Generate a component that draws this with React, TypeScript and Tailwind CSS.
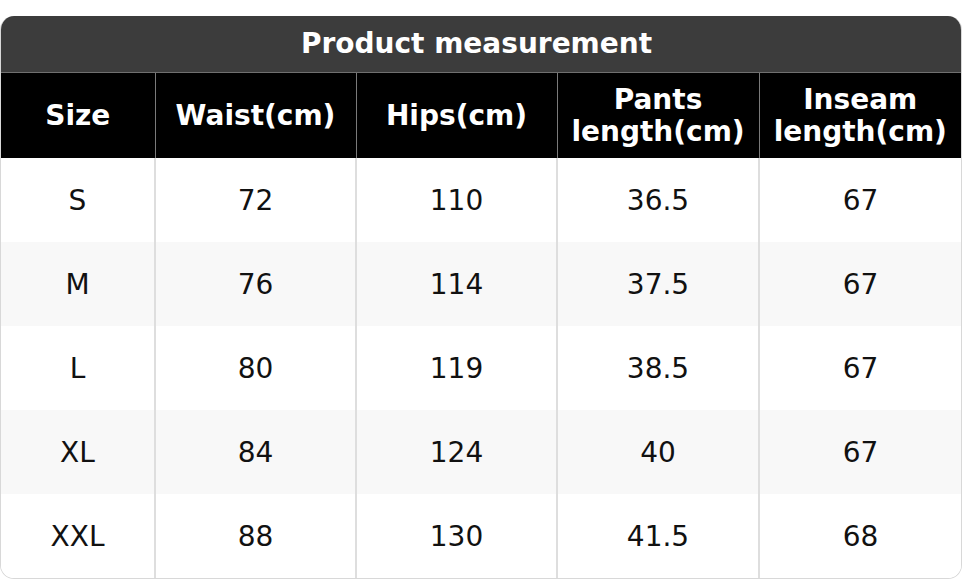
const columns = ['Size', 'Waist(cm)', 'Hips(cm)', 'Pants length(cm)', 'Inseam length(cm)'];
const widths = ['w-[154px]', 'w-[201px]', 'w-[201px]', 'w-[202px]', 'w-[202px]'];

const rows = [
    ['S', '72', '110', '36.5', '67'],
    ['M', '76', '114', '37.5', '67'],
    ['L', '80', '119', '38.5', '67'],
    ['XL', '84', '124', '40', '67'],
    ['XXL', '88', '130', '41.5', '68'],
];

export default function App() {
    return (
        <div className="pt-4 bg-white min-h-screen" style={{ fontFamily: '"DejaVu Sans", Verdana, sans-serif' }}>
            <div className="w-[962px] rounded-[14px] overflow-hidden border-x border-b border-[#d8d8d8]">
                {/* Title */}
                <div className="h-[57px] bg-[#3c3c3c] border-b border-[#707070] flex items-center justify-center pr-[9px]">
                    <h1 className="text-white font-bold text-[28px] leading-none">Product measurement</h1>
                </div>

                <table className="w-full table-fixed border-collapse">
                    <colgroup>
                        {widths.map((w, i) => (
                            <col key={i} className={w} />
                        ))}
                    </colgroup>
                    <thead>
                        <tr className="h-[85px] bg-black">
                            {columns.map((c, i) => (
                                <th
                                    key={c}
                                    className={`text-white font-bold text-[28px] leading-[32px] text-center px-1 ${i > 0 ? 'border-l border-[#7a7a7a]' : ''}`}
                                >
                                    {c}
                                </th>
                            ))}
                        </tr>
                    </thead>
                    <tbody>
                        {rows.map((r, ri) => (
                            <tr key={r[0]} className={`h-[84px] ${ri % 2 === 1 ? 'bg-[#f8f8f8]' : 'bg-white'}`}>
                                {r.map((v, i) => (
                                    <td
                                        key={i}
                                        className={`text-[#111] text-[28px] text-center pt-[2px] ${i > 0 ? 'border-l-2 border-[#dedede]' : ''}`}
                                    >
                                        {v}
                                    </td>
                                ))}
                            </tr>
                        ))}
                    </tbody>
                </table>
            </div>
        </div>
    );
}
